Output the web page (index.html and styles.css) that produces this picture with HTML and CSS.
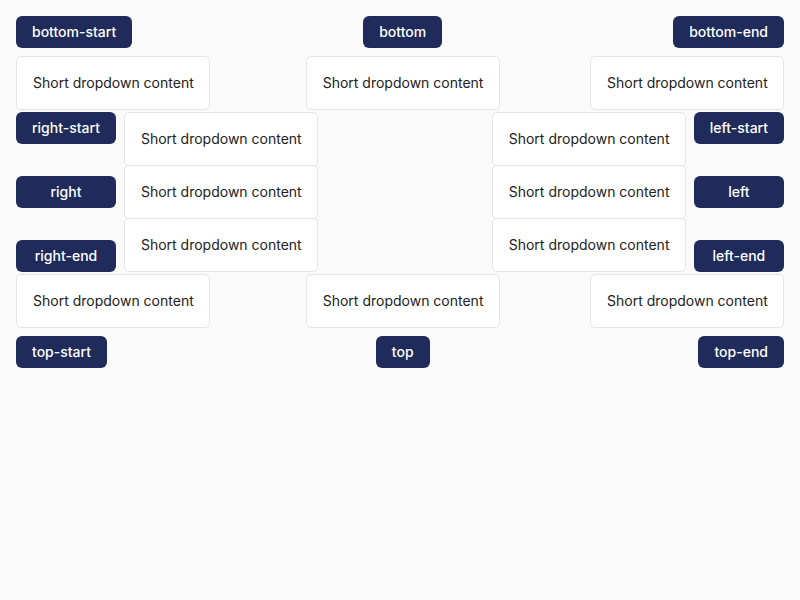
FILE: index.html
```html
<!DOCTYPE html>
<html lang="en">
<head>
<meta charset="utf-8">
<title>Dropdown placements</title>
<link rel="stylesheet" href="styles.css">
</head>
<body>
<div class="page">
  <div class="row">
    <div class="anchor"><button class="btn">bottom-start</button><div class="dd dd-bottom-start">Short dropdown content</div></div>
    <div class="anchor"><button class="btn">bottom</button><div class="dd dd-bottom">Short dropdown content</div></div>
    <div class="anchor"><button class="btn">bottom-end</button><div class="dd dd-bottom-end">Short dropdown content</div></div>
  </div>
  <div class="middle">
    <div class="col">
      <div class="anchor"><button class="btn full">right-start</button><div class="dd dd-right-start">Short dropdown content</div></div>
      <div class="anchor"><button class="btn full">right</button><div class="dd dd-right">Short dropdown content</div></div>
      <div class="anchor"><button class="btn full">right-end</button><div class="dd dd-right-end">Short dropdown content</div></div>
    </div>
    <div class="col">
      <div class="anchor"><button class="btn full">left-start</button><div class="dd dd-left-start">Short dropdown content</div></div>
      <div class="anchor"><button class="btn full">left</button><div class="dd dd-left">Short dropdown content</div></div>
      <div class="anchor"><button class="btn full">left-end</button><div class="dd dd-left-end">Short dropdown content</div></div>
    </div>
  </div>
  <div class="row">
    <div class="anchor"><button class="btn">top-start</button><div class="dd dd-top-start">Short dropdown content</div></div>
    <div class="anchor"><button class="btn">top</button><div class="dd dd-top">Short dropdown content</div></div>
    <div class="anchor"><button class="btn">top-end</button><div class="dd dd-top-end">Short dropdown content</div></div>
  </div>
</div>
</body>
</html>
```

FILE: styles.css
```css
* { box-sizing: border-box; }
html, body { margin: 0; padding: 0; }
body {
  background: #fafafa;
  font-family: Inter, "Noto Sans", sans-serif;
  width: 800px;
  height: 600px;
}
.page {
  padding: 16px;
  display: flex;
  flex-direction: column;
  gap: 64px;
}
.row {
  display: flex;
  justify-content: space-between;
  align-items: flex-start;
}
.middle {
  display: flex;
  justify-content: space-between;
}
.col {
  display: flex;
  flex-direction: column;
  gap: 32px;
}
.anchor {
  position: relative;
}
.btn {
  display: block;
  height: 32px;
  padding: 0 16px;
  border: 0;
  border-radius: 6px;
  background: #1f2b5b;
  color: #ffffff;
  font-family: Inter, "Noto Sans", sans-serif;
  font-size: 14px;
  font-weight: 500;
  line-height: 32px;
  white-space: nowrap;
}
.btn.full { width: 100%; }
.dd {
  position: absolute;
  width: 194px;
  padding: 16px;
  background: #ffffff;
  border: 1px solid #e4e4e7;
  border-radius: 5px;
  font-size: 14px;
  line-height: 20px;
  color: #222222;
  white-space: nowrap;
  z-index: 1;
}
.dd-bottom-start { top: 40px; left: 0; }
.dd-bottom { top: 40px; left: 50%; transform: translateX(-50%); }
.dd-bottom-end { top: 40px; right: 0; }
.dd-top-start { bottom: 40px; left: 0; }
.dd-top { bottom: 40px; left: 50%; transform: translateX(-50%); }
.dd-top-end { bottom: 40px; right: 0; }
.dd-right-start { left: calc(100% + 8px); top: 0; }
.dd-right { left: calc(100% + 8px); top: 50%; transform: translateY(-50%); }
.dd-right-end { left: calc(100% + 8px); bottom: 0; }
.dd-left-start { right: calc(100% + 8px); top: 0; }
.dd-left { right: calc(100% + 8px); top: 50%; transform: translateY(-50%); }
.dd-left-end { right: calc(100% + 8px); bottom: 0; }
```
